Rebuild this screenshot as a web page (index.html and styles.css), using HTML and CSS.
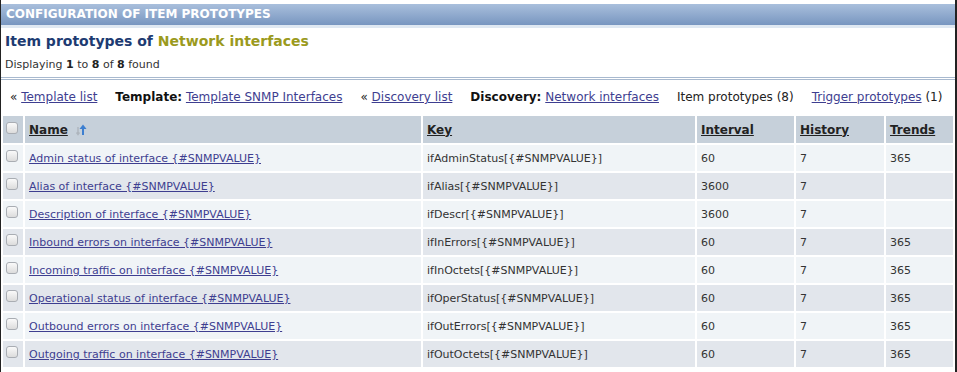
FILE: index.html
```html
<!DOCTYPE html>
<html lang="en">
<head>
  <meta charset="UTF-8" />
  <title>Configuration of item prototypes</title>
  <link rel="stylesheet" href="styles.css">
</head>
<body>
  <div class="frame">
    <div class="header-bar">CONFIGURATION OF ITEM PROTOTYPES</div>

    <div class="title-box">
      <h1>Item prototypes of <span class="host">Network interfaces</span></h1>
      <p class="found">Displaying <b>1</b> to <b>8</b> of <b>8</b> found</p>
    </div>

    <div class="nav">
      <span>« <a href="#">Template list</a></span>
      <span><b>Template:</b> <a href="#">Template SNMP Interfaces</a></span>
      <span>« <a href="#">Discovery list</a></span>
      <span><b>Discovery:</b> <a href="#">Network interfaces</a></span>
      <span>Item prototypes (8)</span>
      <span><a href="#">Trigger prototypes</a> (1)</span>
    </div>

    <table class="items">
      <thead>
        <tr>
          <th class="cb"><span class="box"></span></th>
          <th class="c-name"><a href="#">Name</a>
            <svg class="sort" width="14" height="14" viewBox="0 0 14 14">
              <path d="M4 4v7M2.5 9.5 4 11.5 5.5 9.5" stroke="#aeb5bd" stroke-width="1.4" fill="none"/>
              <path d="M9 12V5" stroke="#3d7fd0" stroke-width="2"/>
              <path d="M5.5 6 9 1.5 12.5 6z" fill="#3d7fd0"/>
            </svg>
          </th>
          <th class="c-key"><a href="#">Key</a></th>
          <th class="c-int"><a href="#">Interval</a></th>
          <th class="c-hist"><a href="#">History</a></th>
          <th class="c-trend"><a href="#">Trends</a></th>
        </tr>
      </thead>
      <tbody>
        <tr>
          <td class="cb"><span class="box"></span></td>
          <td><a href="#">Admin status of interface {#SNMPVALUE}</a></td>
          <td>ifAdminStatus[{#SNMPVALUE}]</td>
          <td>60</td><td>7</td><td>365</td>
        </tr>
        <tr>
          <td class="cb"><span class="box"></span></td>
          <td><a href="#">Alias of interface {#SNMPVALUE}</a></td>
          <td>ifAlias[{#SNMPVALUE}]</td>
          <td>3600</td><td>7</td><td></td>
        </tr>
        <tr>
          <td class="cb"><span class="box"></span></td>
          <td><a href="#">Description of interface {#SNMPVALUE}</a></td>
          <td>ifDescr[{#SNMPVALUE}]</td>
          <td>3600</td><td>7</td><td></td>
        </tr>
        <tr>
          <td class="cb"><span class="box"></span></td>
          <td><a href="#">Inbound errors on interface {#SNMPVALUE}</a></td>
          <td>ifInErrors[{#SNMPVALUE}]</td>
          <td>60</td><td>7</td><td>365</td>
        </tr>
        <tr>
          <td class="cb"><span class="box"></span></td>
          <td><a href="#">Incoming traffic on interface {#SNMPVALUE}</a></td>
          <td>ifInOctets[{#SNMPVALUE}]</td>
          <td>60</td><td>7</td><td>365</td>
        </tr>
        <tr>
          <td class="cb"><span class="box"></span></td>
          <td><a href="#">Operational status of interface {#SNMPVALUE}</a></td>
          <td>ifOperStatus[{#SNMPVALUE}]</td>
          <td>60</td><td>7</td><td>365</td>
        </tr>
        <tr>
          <td class="cb"><span class="box"></span></td>
          <td><a href="#">Outbound errors on interface {#SNMPVALUE}</a></td>
          <td>ifOutErrors[{#SNMPVALUE}]</td>
          <td>60</td><td>7</td><td>365</td>
        </tr>
        <tr>
          <td class="cb"><span class="box"></span></td>
          <td><a href="#">Outgoing traffic on interface {#SNMPVALUE}</a></td>
          <td>ifOutOctets[{#SNMPVALUE}]</td>
          <td>60</td><td>7</td><td>365</td>
        </tr>
      </tbody>
    </table>
  </div>
</body>
</html>
```

FILE: styles.css
```css
body {
  margin: 0;
  background-color: #fff;
  font-family: 'DejaVu Sans', Verdana, sans-serif;
  font-size: 11px;
  color: #333;
}
.frame {
  height: 370px;
  border-left: 1px solid #222;
  border-right: 2px solid #222;
  border-bottom: 2px solid #222;
  padding-top: 4px;
  overflow: hidden;
}
.header-bar {
  height: 21px;
  line-height: 21px;
  padding-left: 5px;
  background: linear-gradient(#a9bfdc, #7896c0);
  color: #fff;
  font-weight: bold;
  font-size: 12px;
  border-bottom: 3px solid #dfe8f2;
}
.title-box {
  padding: 1px 4px 0;
  border-bottom: 3px double #a8b9cf;
  height: 48px;
}
h1 {
  margin: 0;
  font-size: 14px;
  line-height: 24px;
  color: #1d3b72;
}
h1 .host {
  color: #9b9a1d;
}
.found {
  margin: 5px 0 0;
  color: #333;
}
.found b {
  color: #222;
}
.nav {
  display: flex;
  padding: 10px 9px 0;
  height: 23px;
  font-size: 12px;
  color: #222;
  white-space: nowrap;
}
.nav span {
  flex-shrink: 0;
}
.nav span + span {
  margin-left: 18px;
}
a {
  color: #3e3e90;
}
.nav b {
  color: #111;
}
.items {
  width: 100%;
  border-collapse: separate;
  border-spacing: 2px;
  margin-top: 1px;
}
.items th {
  background-color: #c6d0da;
  height: 27px;
  text-align: left;
  padding: 0 4px;
  font-size: 12px;
}
.items th a {
  color: #222;
}
.items td {
  height: 26px;
  padding: 0 4px;
  background-color: #f0f4f7;
  font-size: 11px;
}
.items tbody tr:nth-child(even) td {
  background-color: #e2e6ec;
}
.items .cb {
  width: 14px;
  padding: 0 3px;
}
.c-name { width: 388px; }
.c-key { width: 264px; }
.c-int { width: 89px; }
.c-hist { width: 80px; }
.box {
  display: block;
  width: 10px;
  height: 10px;
  border: 1px solid #a9adb3;
  border-radius: 3px;
  background: linear-gradient(#fafafa, #dcdcdc);
  margin-top: -4px;
}
.sort {
  vertical-align: top;
  margin-left: 2px;
}
```
